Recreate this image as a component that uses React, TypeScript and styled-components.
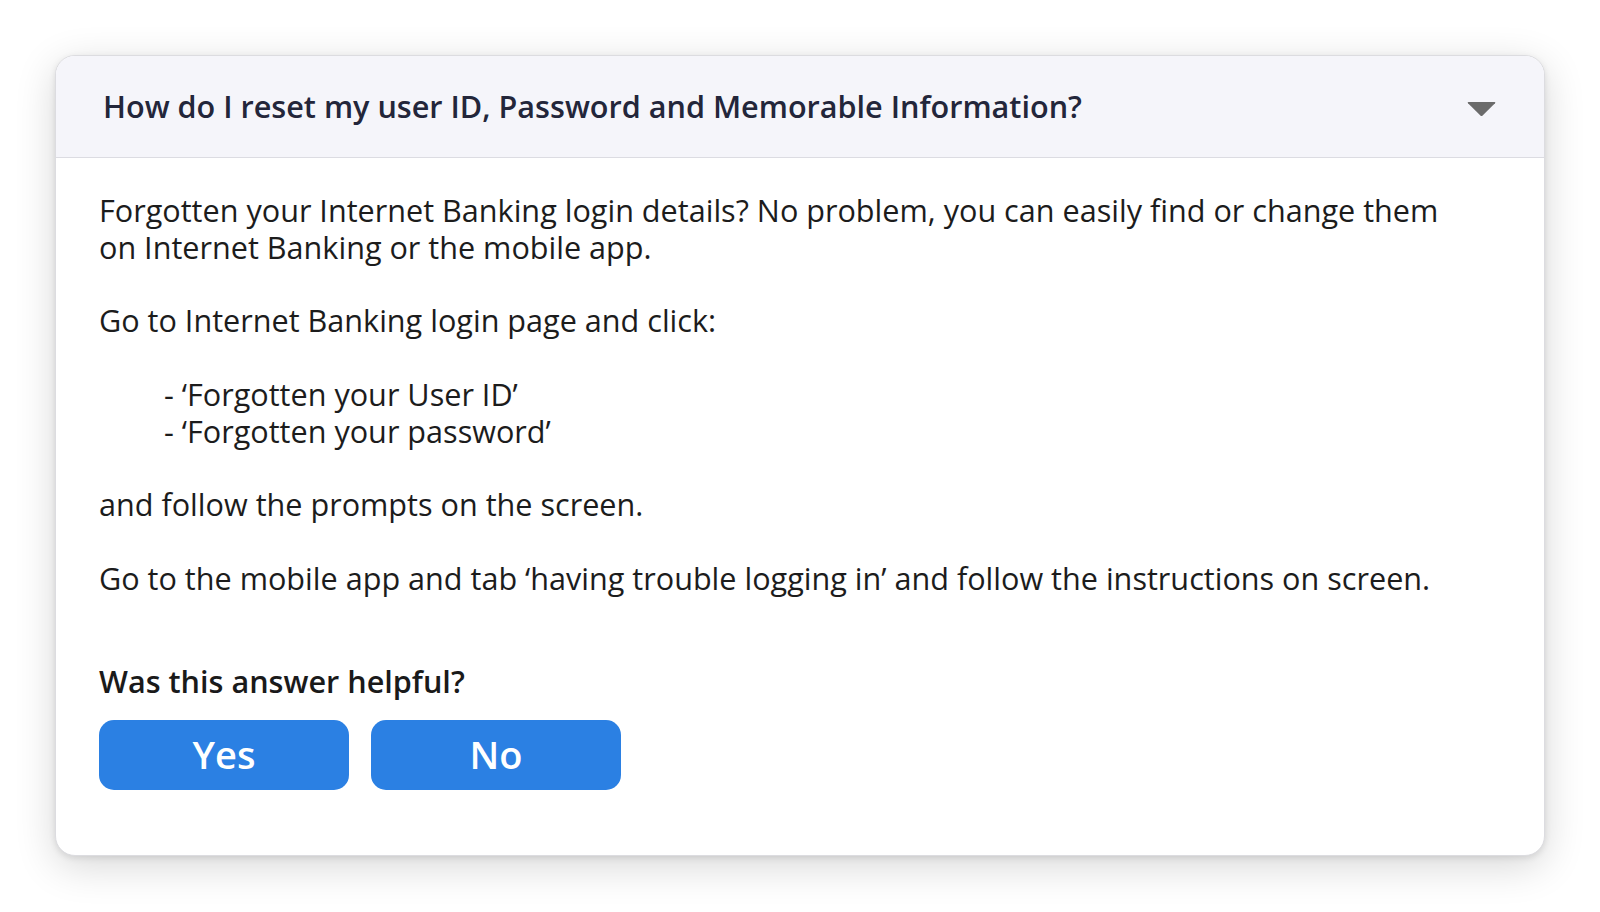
import React from "react";
import styled, { createGlobalStyle } from "styled-components";

const GlobalStyle = createGlobalStyle`
  html, body {
    margin: 0;
    padding: 0;
    background: #ffffff;
  }
  body {
    font-family: "Open Sans", "Noto Sans", Arial, sans-serif;
    -webkit-font-smoothing: antialiased;
  }
`;

const Page = styled.div`
  box-sizing: border-box;
  width: 1600px;
  min-height: 912px;
  padding: 55px 55px;
  background: #ffffff;
`;

const Card = styled.section`
  box-sizing: border-box;
  width: 1490px;
  background: #ffffff;
  border: 1px solid #dcdce0;
  border-radius: 20px;
  overflow: hidden;
  box-shadow: 0 2px 6px rgba(0, 0, 0, 0.1), 0 10px 40px rgba(0, 0, 0, 0.16);
`;

const Header = styled.header`
  box-sizing: border-box;
  height: 102px;
  display: flex;
  align-items: center;
  justify-content: space-between;
  padding: 0 48px 0 47px;
  background: #f5f5fa;
  border-bottom: 1px solid #dcdce2;
`;

const Title = styled.h2`
  margin: 0 0 2px 0;
  font-family: "Open Sans", sans-serif;
  font-size: 30.6px;
  font-weight: 600;
  color: #23263a;
  letter-spacing: 0;
`;

const Caret = styled.svg`
  display: block;
  width: 29px;
  height: 16px;
  margin-top: 4px;
`;

const Body = styled.div`
  padding: 34px 44px 65px 43px;
`;

const Para = styled.p<{ $gap?: number }>`
  margin: 0 0 ${(p) => (p.$gap ?? 36.8)}px 0;
  font-size: 30.6px;
  line-height: 36.8px;
  color: #1c1c1c;
`;

const List = styled.ul`
  margin: 0 0 36.8px 0;
  padding: 0 0 0 65px;
  list-style: none;
`;

const Item = styled.li`
  font-size: 30.6px;
  line-height: 36.8px;
  color: #1c1c1c;
`;

const Question = styled.h3`
  margin: 0;
  font-size: 30.6px;
  line-height: 36.8px;
  font-weight: 600;
  color: #1a1a1a;
`;

const Buttons = styled.div`
  display: flex;
  gap: 22px;
  margin-top: 20px;
`;

const Vote = styled.button`
  width: 250px;
  height: 70px;
  border: none;
  border-radius: 15px;
  background: #2b80e3;
  color: #ffffff;
  font-family: "Open Sans", sans-serif;
  font-size: 38px;
  font-weight: 600;
  line-height: 1;
  padding: 0 0 2px 0;
  cursor: pointer;
`;

export default function App() {
  return (
    <>
      <GlobalStyle />
      <Page>
        <Card>
          <Header>
            <Title>How do I reset my user ID, Password and Memorable Information?</Title>
            <Caret viewBox="0 0 29 16" aria-hidden="true">
              <path d="M1.5 1 H27.5 Q29 1 28 2.2 L15.6 14.6 Q14.5 15.6 13.4 14.6 L1 2.2 Q0 1 1.5 1 Z" fill="#6b6b6b" />
            </Caret>
          </Header>
          <Body>
            <Para>
              Forgotten your Internet Banking login details? No problem, you can easily find or change them
              <br />
              on Internet Banking or the mobile app.
            </Para>
            <Para>Go to Internet Banking login page and click:</Para>
            <List>
              <Item>- ‘Forgotten your User ID’</Item>
              <Item>- ‘Forgotten your password’</Item>
            </List>
            <Para>and follow the prompts on the screen.</Para>
            <Para $gap={66}>
              Go to the mobile app and tab ‘having trouble logging in’ and follow the instructions on screen.
            </Para>
            <Question>Was this answer helpful?</Question>
            <Buttons>
              <Vote>Yes</Vote>
              <Vote>No</Vote>
            </Buttons>
          </Body>
        </Card>
      </Page>
    </>
  );
}
